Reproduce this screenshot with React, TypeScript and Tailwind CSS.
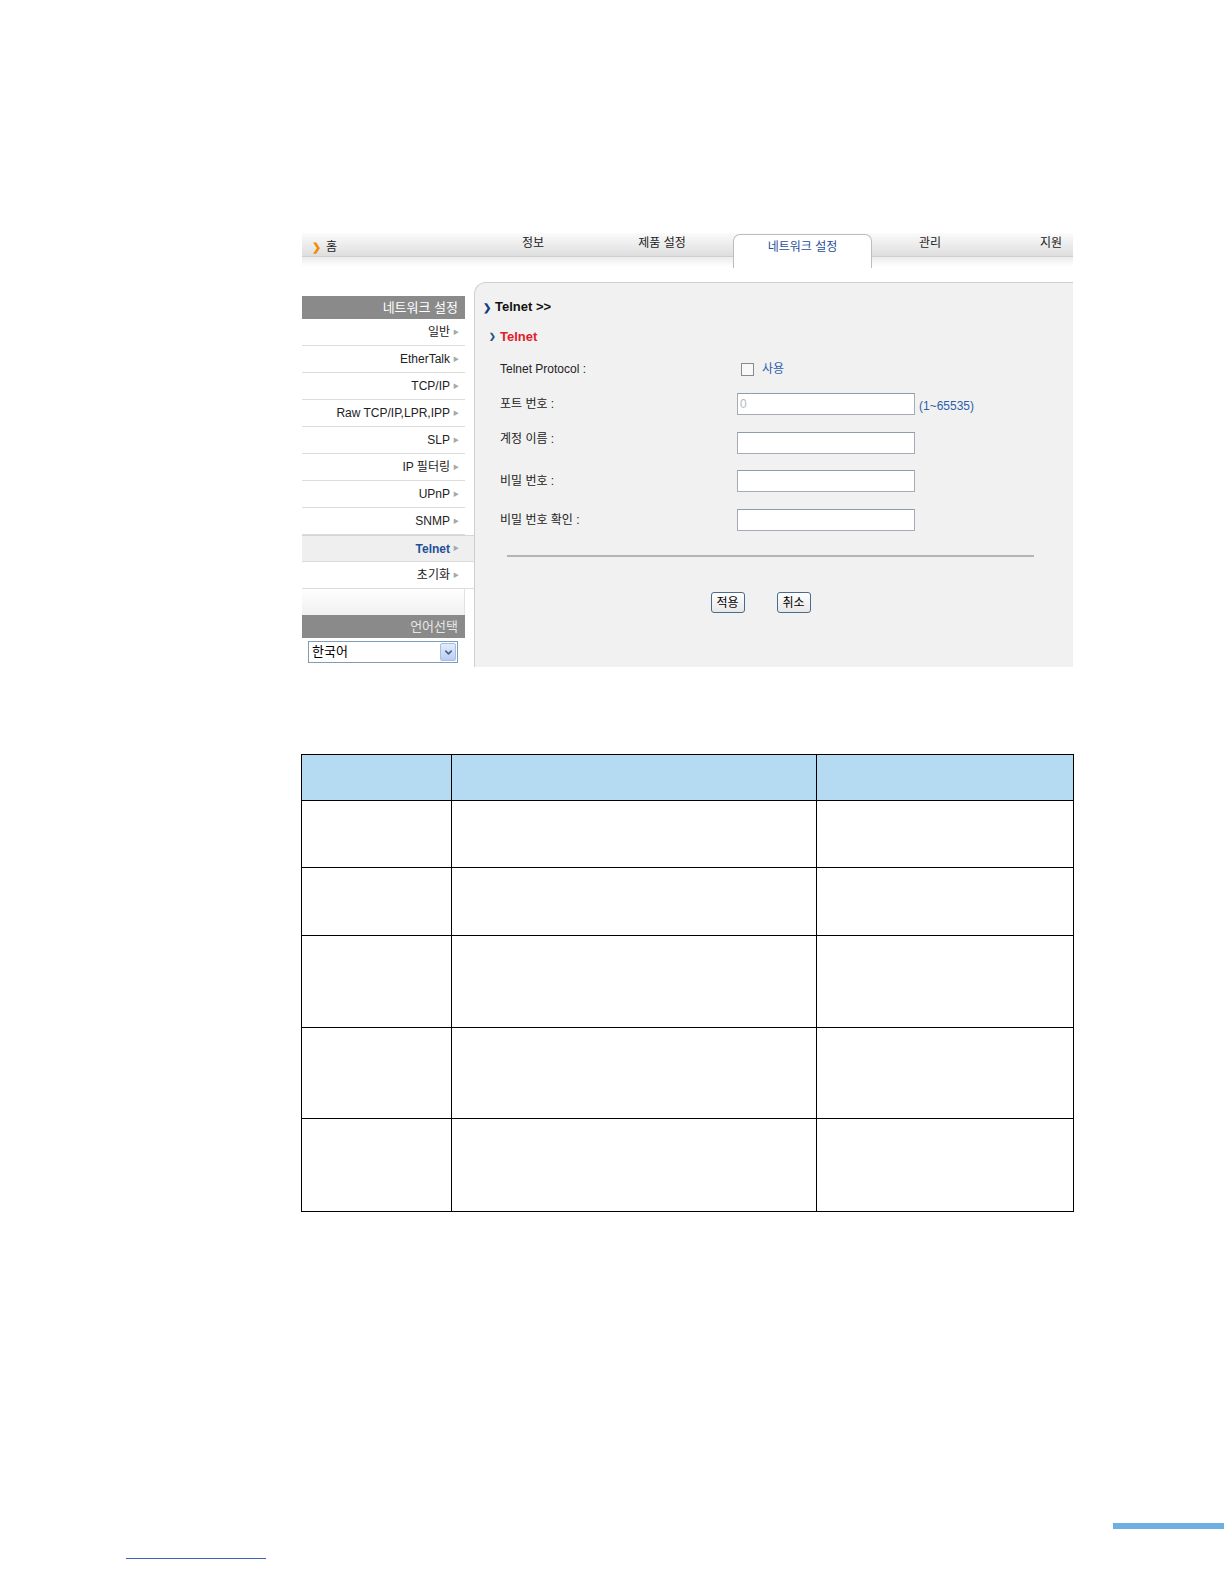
import { ChevronDown } from "lucide-react";

const menuItems = [
  "일반",
  "EtherTalk",
  "TCP/IP",
  "Raw TCP/IP,LPR,IPP",
  "SLP",
  "IP 필터링",
  "UPnP",
  "SNMP",
];

const formRows = [
  { label: "포트 번호 :", value: "0", hint: "(1~65535)", h: "h-[38px]", up: false },
  { label: "계정 이름 :", value: "", hint: "", h: "h-[39px]", up: true },
  { label: "비밀 번호 :", value: "", hint: "", h: "h-[38px]", up: false },
  { label: "비밀 번호 확인 :", value: "", hint: "", h: "h-[39px]", up: false },
];

const tableRows = ["h-[67px]", "h-[68px]", "h-[92px]", "h-[91px]", "h-[93px]"];

function Arrow() {
  return <span className="ml-[3px] text-[6px] text-[#a8a8a8]">▶</span>;
}

function MenuRow({ label, active, wide }: { label: string; active?: boolean; wide?: boolean }) {
  return (
    <div
      className={`h-[27px] flex items-center justify-end border-b border-[#dcdcdc] ${
        wide ? "w-[172px] pr-[15px]" : "w-[163px] pr-[6px]"
      } ${active ? "bg-[#efefef] border-t border-t-[#d6d6d6]" : ""}`}
    >
      <span className={`text-[12px] ${active ? "font-bold text-[#1f4f9a]" : "text-[#222]"}`}>
        {label}
      </span>
      <Arrow />
    </div>
  );
}

export default function App() {
  return (
    <div
      className="w-[1224px] h-[1584px] overflow-hidden bg-white flex flex-col"
      style={{ fontFamily: '"Liberation Sans", "Noto Sans CJK KR", sans-serif' }}
    >
      {/* screenshot */}
      <div className="pt-[233px] pl-[302px]">
        <div className="w-[771px]">
          {/* tab bar */}
          <div className="relative h-[49px]">
            <div className="h-[24px] bg-gradient-to-b from-[#fbfbfb] to-[#dedede] border-b border-[#cfcfcf] flex items-center">
              <div className="w-[171px] pl-[10px] flex items-center gap-[5px] pt-[5px]">
                <span className="text-[#f08a00] text-[11px] font-bold">❯</span>
                <span className="text-[12px] text-[#222]">홈</span>
              </div>
              <div className="w-[120px] text-center text-[12px] text-[#222] -mt-[3px]">정보</div>
              <div className="w-[138px] text-center text-[12px] text-[#222] -mt-[3px]">제품 설정</div>
              <div className="w-[141px]" />
              <div className="w-[116px] text-center text-[12px] text-[#222] -mt-[3px]">관리</div>
              <div className="flex-1 text-right pr-[11px] text-[12px] text-[#222] -mt-[3px]">지원</div>
            </div>
            <div className="h-[10px] bg-gradient-to-b from-[#ececec] to-white" />
            <div className="absolute left-[431px] top-[1px] w-[139px] h-[34px] bg-white border border-b-0 border-[#bdbdbd] rounded-t-[7px] flex justify-center pt-[3px]">
              <span className="text-[12px] text-[#1f4f9a]">네트워크 설정</span>
            </div>
          </div>

          {/* body */}
          <div className="flex h-[385px]">
            {/* sidebar */}
            <div className="w-[172px] pt-[14px] flex flex-col">
              <div className="w-[163px] h-[23px] bg-[#8a8a8a] text-white text-[13px] flex items-center justify-end pr-[7px]">
                네트워크 설정
              </div>
              {menuItems.map((m) => (
                <MenuRow key={m} label={m} />
              ))}
              <MenuRow label="Telnet" active wide />
              <MenuRow label="초기화" wide />
              <div className="w-[163px] h-[26px] bg-gradient-to-b from-white to-[#f0f0f0] border-r border-[#e2e2e2]" />
              <div className="w-[163px] h-[23px] bg-[#8a8a8a] text-[#e6e6e6] text-[13px] flex items-center justify-end pr-[7px]">
                언어선택
              </div>
              <div className="w-[163px] pt-[3px] pl-[6px]">
                <div className="w-[150px] h-[22px] border border-[#7f9db9] bg-white flex items-center justify-between">
                  <span className="pl-[3px] text-[13px] text-black">한국어</span>
                  <div className="w-[16px] h-[18px] mr-[1px] rounded-[2px] bg-gradient-to-b from-[#e4ecfb] to-[#b9cdf3] border border-[#a6bde6] flex items-center justify-center">
                    <ChevronDown size={11} strokeWidth={3.5} className="text-[#4d6185]" />
                  </div>
                </div>
              </div>
            </div>

            {/* main panel */}
            <div className="flex-1 bg-[#f1f1f1] border-l border-t border-[#cfcfcf] rounded-tl-[12px] flex flex-col">
              <div className="pl-[8px] pt-[14px] flex items-center gap-[4px] h-[34px]">
                <span className="text-[#123c7e] text-[10px] font-bold">❯</span>
                <span className="text-[13px] font-bold text-[#111]">Telnet &gt;&gt;</span>
              </div>
              <div className="pl-[14px] pt-[10px] flex items-center gap-[4px] h-[30px]">
                <span className="text-[#2a4f88] text-[8px] font-bold">❯</span>
                <span className="text-[13px] font-bold text-[#e0202a]">Telnet</span>
              </div>
              <div className="pl-[25px] mt-[6px] flex items-center h-[32px]">
                <span className="w-[241px] text-[12px] text-[#222]">Telnet Protocol :</span>
                <span className="w-[13px] h-[13px] border border-[#8a8a8a] bg-[#f8f8f8]" />
                <span className="ml-[8px] text-[12px] text-[#2f5ea8]">사용</span>
              </div>
              {formRows.map((r) => (
                <div key={r.label} className={`pl-[25px] flex items-center ${r.h}`}>
                  <span className={`w-[237px] text-[12px] text-[#222] ${r.up ? "-mt-[8px]" : ""}`}>
                    {r.label}
                  </span>
                  <div className="w-[178px] h-[22px] border border-[#a5acb5] border-t-[#8c9cb4] bg-white flex items-center pl-[2px]">
                    <span className="text-[12px] text-[#b8b8b8]">{r.value}</span>
                  </div>
                  {r.hint && <span className="ml-[4px] mt-[4px] text-[12px] text-[#2f5ea8]">{r.hint}</span>}
                </div>
              ))}
              <div className="ml-[32px] mt-[16px] w-[527px] h-[2px] bg-[#b4b4b4]" />
              <div className="mt-[35px] flex justify-center gap-[32px] -ml-[27px]">
                <button className="w-[34px] h-[21px] rounded-[3px] border border-[#4a6a90] bg-gradient-to-b from-white to-[#e8e8e8] text-[12px] text-black leading-none">
                  적용
                </button>
                <button className="w-[34px] h-[21px] rounded-[3px] border border-[#4a6a90] bg-gradient-to-b from-white to-[#e8e8e8] text-[12px] text-black leading-none">
                  취소
                </button>
              </div>
            </div>
          </div>
        </div>
      </div>

      {/* table */}
      <div className="mt-[87px] pl-[301px]">
        <table className="w-[773px] border-collapse">
          <tbody>
            <tr className="h-[46px] bg-[#b4dbf1]">
              <td className="w-[150px] border border-black" />
              <td className="w-[365px] border border-black" />
              <td className="border border-black" />
            </tr>
            {tableRows.map((h, i) => (
              <tr key={i} className={h}>
                <td className="border border-black" />
                <td className="border border-black" />
                <td className="border border-black" />
              </tr>
            ))}
          </tbody>
        </table>
      </div>

      {/* page footer marks */}
      <div className="mt-[311px] flex justify-end">
        <div className="w-[111px] h-[6px] bg-[#6cb0e0]" />
      </div>
      <div className="mt-[29px] pl-[126px]">
        <div className="w-[140px] h-[1px] bg-[#3f63b8]" />
      </div>
    </div>
  );
}
